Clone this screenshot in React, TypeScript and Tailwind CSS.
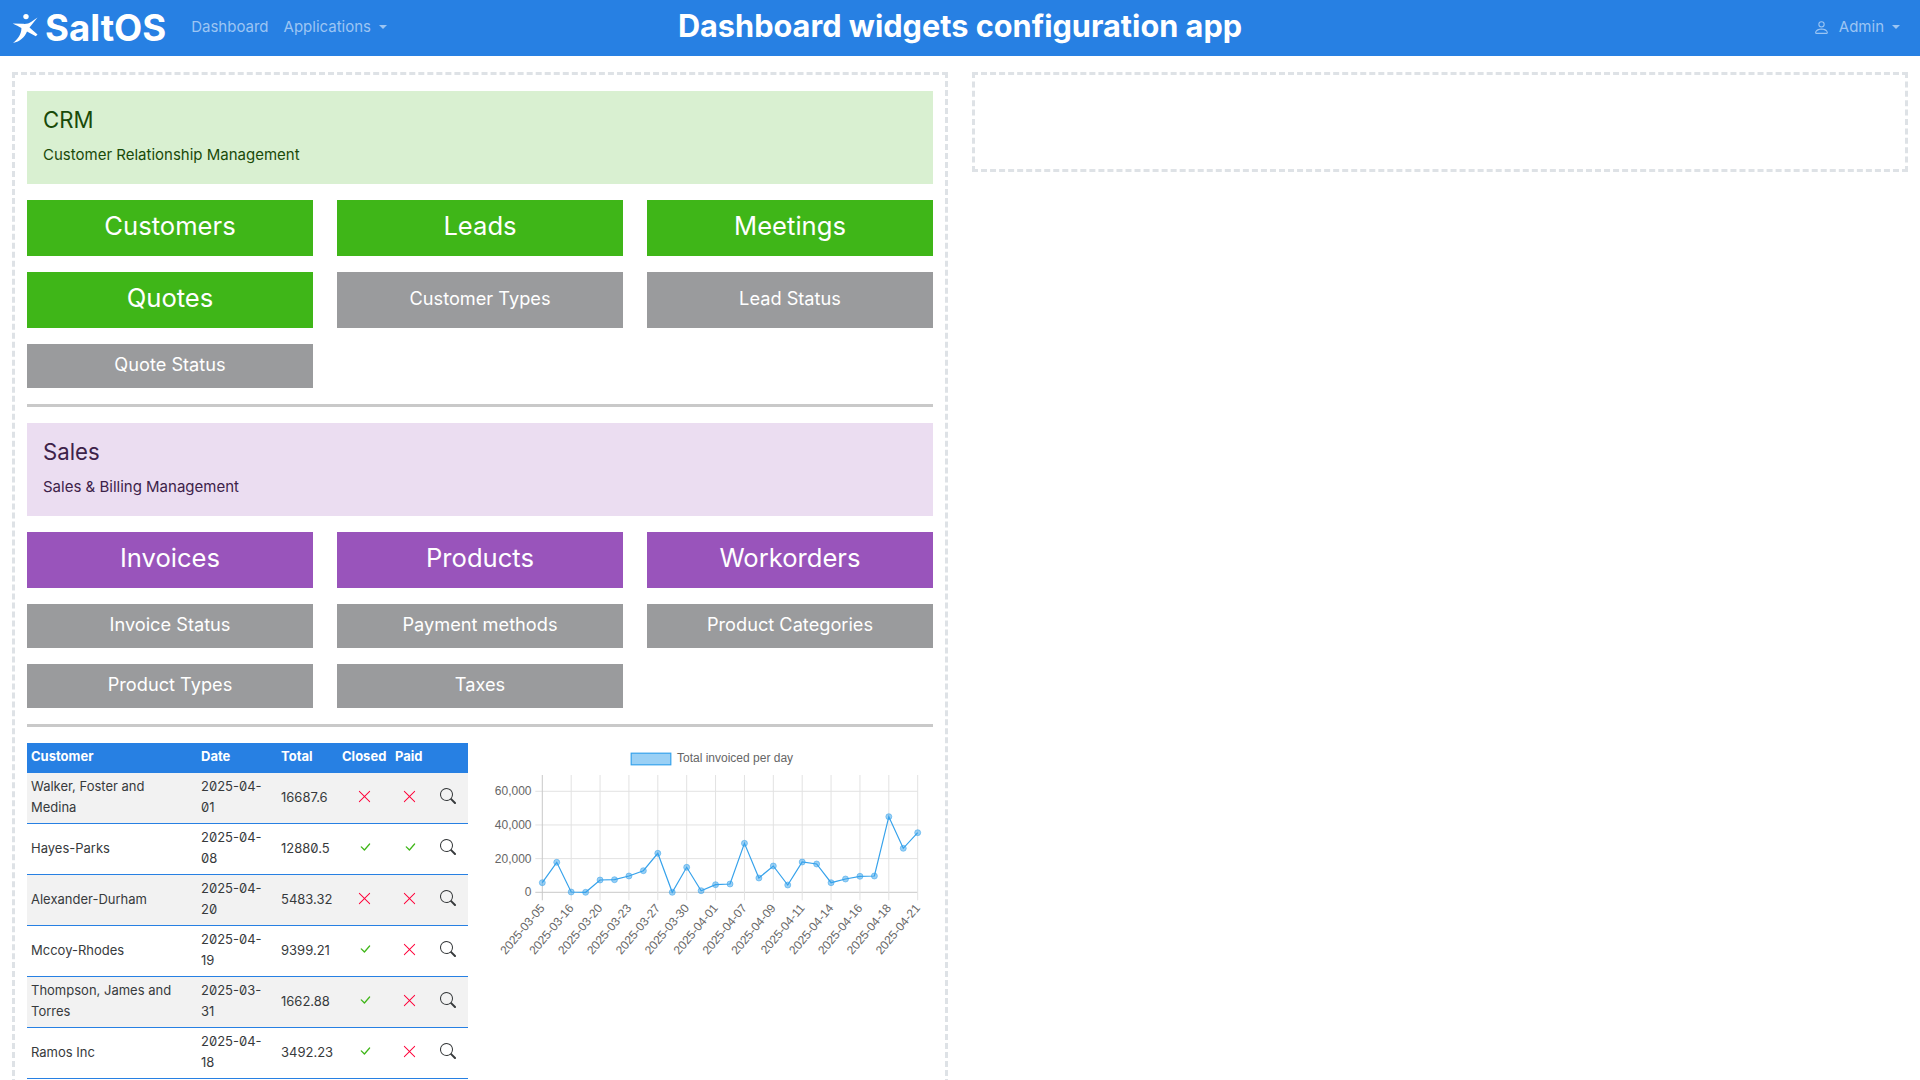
import { BsCheckLg, BsPerson, BsSearch, BsXLg } from "react-icons/bs";

const FONT = "font-['Inter','Noto_Sans',sans-serif]";

const ROWS = [
  { customer: "Walker, Foster and Medina", date: "2025-04-01", total: "16687.6", closed: false, paid: false },
  { customer: "Hayes-Parks", date: "2025-04-08", total: "12880.5", closed: true, paid: true },
  { customer: "Alexander-Durham", date: "2025-04-20", total: "5483.32", closed: false, paid: false },
  { customer: "Mccoy-Rhodes", date: "2025-04-19", total: "9399.21", closed: true, paid: false },
  { customer: "Thompson, James and Torres", date: "2025-03-31", total: "1662.88", closed: true, paid: false },
  { customer: "Ramos Inc", date: "2025-04-18", total: "3492.23", closed: true, paid: false },
];

const LABELS = [
  "2025-03-05", "2025-03-16", "2025-03-20", "2025-03-23", "2025-03-27", "2025-03-30", "2025-04-01",
  "2025-04-07", "2025-04-09", "2025-04-11", "2025-04-14", "2025-04-16", "2025-04-18", "2025-04-21",
];

// y values measured off the reference, in chart pixels
const POINTS = [
  139.7, 119.3, 149, 149.3, 137, 136.7, 133, 127.7, 110.3, 149.3, 124.3, 147.7, 141.7, 141,
  100.3, 135, 123, 142, 119, 121, 139.7, 136, 133.3, 133, 73.7, 105.3, 89.7,
];
const LEFT = 50.3;
const RIGHT = 425.7;
const STEP = (RIGHT - LEFT) / 26;

function Logo() {
  return (
    <svg width="28" height="30" viewBox="0 0 28 30" className="shrink-0">
      <circle cx="14" cy="3.6" r="2.7" fill="#fff" />
      <path
        d="M0.7 10.5 L10.5 10.8 C14 11.2 17 10.5 19 9 L25.5 4.6 L19.5 12 L17.5 14.5 L25.5 21.5 L23.8 23.2 L15 18.5 C12.8 24 8 28.6 1 30 C6 26 9.6 21 9.4 15 C7 13.6 4 12 0.7 10.5 Z"
        fill="#fff"
      />
    </svg>
  );
}

function Caret() {
  return <span className="ml-2 inline-block border-x-[4px] border-t-[4px] border-x-transparent border-t-current align-middle" />;
}

function Navbar() {
  return (
    <header className="grid h-14 grid-cols-[1fr_auto_1fr] items-center bg-[#2780e3] px-3">
      <div className="flex items-center">
        <Logo />
        <span className="ml-[5px] text-[36.6px] leading-none font-bold text-white">SaltOS</span>
        <nav className="ml-[25px] flex gap-[15px] pb-[2px] text-[15px] text-[#9cc5f3]">
          <span>Dashboard</span>
          <span className="flex items-center">
            Applications
            <Caret />
          </span>
        </nav>
      </div>
      <h1 className="pb-[4px] text-center text-[30.7px] leading-none font-bold text-white">
        Dashboard widgets configuration app
      </h1>
      <div className="flex items-center justify-end pr-2 pb-[2px] text-[15px] text-[#9cc5f3]">
        <BsPerson className="mr-[9px] size-[17px]" />
        Admin
        <Caret />
      </div>
    </header>
  );
}

function Tile({ label, color, big }: { label: string; color: string; big?: boolean }) {
  return (
    <div
      className={`flex items-center justify-center pb-[3px] text-white ${color} ${
        big ? "h-14 text-[25.6px]" : "min-h-11 text-[18.2px]"
      }`}
    >
      {label}
    </div>
  );
}

function Section({
  title,
  text,
  bg,
  big,
  small,
  color,
}: {
  title: string;
  text: string;
  bg: string;
  big: string[];
  small: string[];
  color: string;
}) {
  return (
    <>
      <div className={`h-[93px] px-4 pt-[14px] ${bg}`}>
        <div className="text-[22.2px] leading-[29px]">{title}</div>
        <div className="mt-[10px] text-[15px] leading-[22px]">{text}</div>
      </div>
      <div className="mt-4 grid grid-cols-3 gap-x-6 gap-y-4">
        {big.map((label) => (
          <Tile key={label} label={label} color={color} big />
        ))}
        {small.map((label) => (
          <Tile key={label} label={label} color="bg-[#9a9b9d]" />
        ))}
      </div>
      <hr className="mt-4 mb-4 h-[3px] border-0 bg-[#c9c9c9]" />
    </>
  );
}

function StatusIcon({ ok }: { ok: boolean }) {
  return ok ? (
    <BsCheckLg className="mx-auto size-[14px] text-[#3fb618]" />
  ) : (
    <BsXLg className="mx-auto size-[15px] text-[#ff0039]" />
  );
}

function InvoiceTable() {
  return (
    <table className="w-[441px] table-fixed border-separate border-spacing-0 text-[13px] leading-[21px] text-[#373a3c]">
      <colgroup>
        <col className="w-[170px]" />
        <col className="w-[80px]" />
        <col className="w-[61px]" />
        <col className="w-[53px]" />
        <col className="w-[37px]" />
        <col className="w-[40px]" />
      </colgroup>
      <thead>
        <tr className="h-[30px] bg-[#2780e3] text-left text-white">
          <th className="px-1 pb-[3px] font-bold">Customer</th>
          <th className="px-1 pb-[3px] font-bold">Date</th>
          <th className="px-1 pb-[3px] font-bold">Total</th>
          <th className="px-1 pb-[3px] font-bold whitespace-nowrap">Closed</th>
          <th className="px-1 pb-[3px] font-bold">Paid</th>
          <th />
        </tr>
      </thead>
      <tbody>
        {ROWS.map((row, i) => (
          <tr key={row.customer} className={`h-[51px] ${i % 2 === 0 ? "bg-[#f2f2f2]" : ""}`}>
            <td className="border-b border-[#2780e3] px-1 pt-[3px] pb-[5px]">{row.customer}</td>
            <td className="border-b border-[#2780e3] px-1 pt-[3px] pb-[5px] [font-feature-settings:'zero']">{row.date}</td>
            <td className="border-b border-[#2780e3] px-1 pt-[3px] pb-[5px] [font-feature-settings:'zero']">{row.total}</td>
            <td className="border-b border-[#2780e3] px-1 pt-[2px] pb-[6px]">
              <StatusIcon ok={row.closed} />
            </td>
            <td className="border-b border-[#2780e3] px-1 pt-[2px] pb-[6px]">
              <StatusIcon ok={row.paid} />
            </td>
            <td className="border-b border-[#2780e3] px-1 pt-[2px] pb-[6px]">
              <BsSearch className="mx-auto size-[16px] text-[#373a3c]" />
            </td>
          </tr>
        ))}
      </tbody>
    </table>
  );
}

function Chart() {
  const top = 32;
  const zero = 149.3;
  const line = POINTS.map((y, i) => `${LEFT + i * STEP},${y}`).join(" ");
  return (
    <svg width="441" height="240" className="block font-['Liberation_Sans',sans-serif] text-[12px]">
      <rect x="139.2" y="10.2" width="39.6" height="11.6" fill="#9ad0f5" stroke="#36a2eb" strokeWidth="1.2" />
      <text x="185" y="19" fill="#666">
        Total invoiced per day
      </text>
      {[0, 1, 2, 3].map((n) => {
        const y = zero - n * 33.67;
        return (
          <g key={n}>
            <line x1={LEFT - 7} x2={RIGHT} y1={y} y2={y} stroke={n === 0 ? "#c8c8c8" : "#e2e2e2"} />
            <text x="39.5" y={y + 4} textAnchor="end" fill="#666">
              {(n * 20000).toLocaleString("en-US")}
            </text>
          </g>
        );
      })}
      {LABELS.map((label, i) => {
        const x = LEFT + i * 2 * STEP;
        return (
          <g key={label}>
            <line x1={x} x2={x} y1={top} y2={zero + 8} stroke={i === 0 ? "#c8c8c8" : "#e2e2e2"} />
            <text x={x + 3} y={zero + 16} textAnchor="end" fill="#666" transform={`rotate(-50 ${x + 3} ${zero + 16})`}>
              {label}
            </text>
          </g>
        );
      })}
      <polyline points={line} fill="none" stroke="#36a2eb" strokeWidth="1.2" />
      {POINTS.map((y, i) => (
        <circle
          key={i}
          cx={LEFT + i * STEP}
          cy={y}
          r="3"
          fill="#36a2eb"
          fillOpacity="0.5"
          stroke="#36a2eb"
          strokeOpacity="0.5"
        />
      ))}
    </svg>
  );
}

export default function App() {
  return (
    <div className={`h-[1080px] overflow-hidden bg-white text-[#373a3c] ${FONT}`}>
      <Navbar />
      <main className="grid grid-cols-2 items-start gap-6 px-3 pt-4">
        <div className="border-[3px] border-dashed border-[#dee2e6] px-3 pt-4 pb-3">
          <Section
            title="CRM"
            text="Customer Relationship Management"
            bg="bg-[#d9f0d1] text-[#194a09]"
            color="bg-[#3fb618]"
            big={["Customers", "Leads", "Meetings", "Quotes"]}
            small={["Customer Types", "Lead Status", "Quote Status"]}
          />
          <Section
            title="Sales"
            text="Sales & Billing Management"
            bg="bg-[#ebddf1] text-[#3d2249]"
            color="bg-[#9954bb]"
            big={["Invoices", "Products", "Workorders"]}
            small={["Invoice Status", "Payment methods", "Product Categories", "Product Types", "Taxes"]}
          />
          <div className="grid grid-cols-2 gap-6">
            <InvoiceTable />
            <Chart />
          </div>
        </div>
        <div className="h-[100px] border-[3px] border-dashed border-[#dee2e6]" />
      </main>
    </div>
  );
}
